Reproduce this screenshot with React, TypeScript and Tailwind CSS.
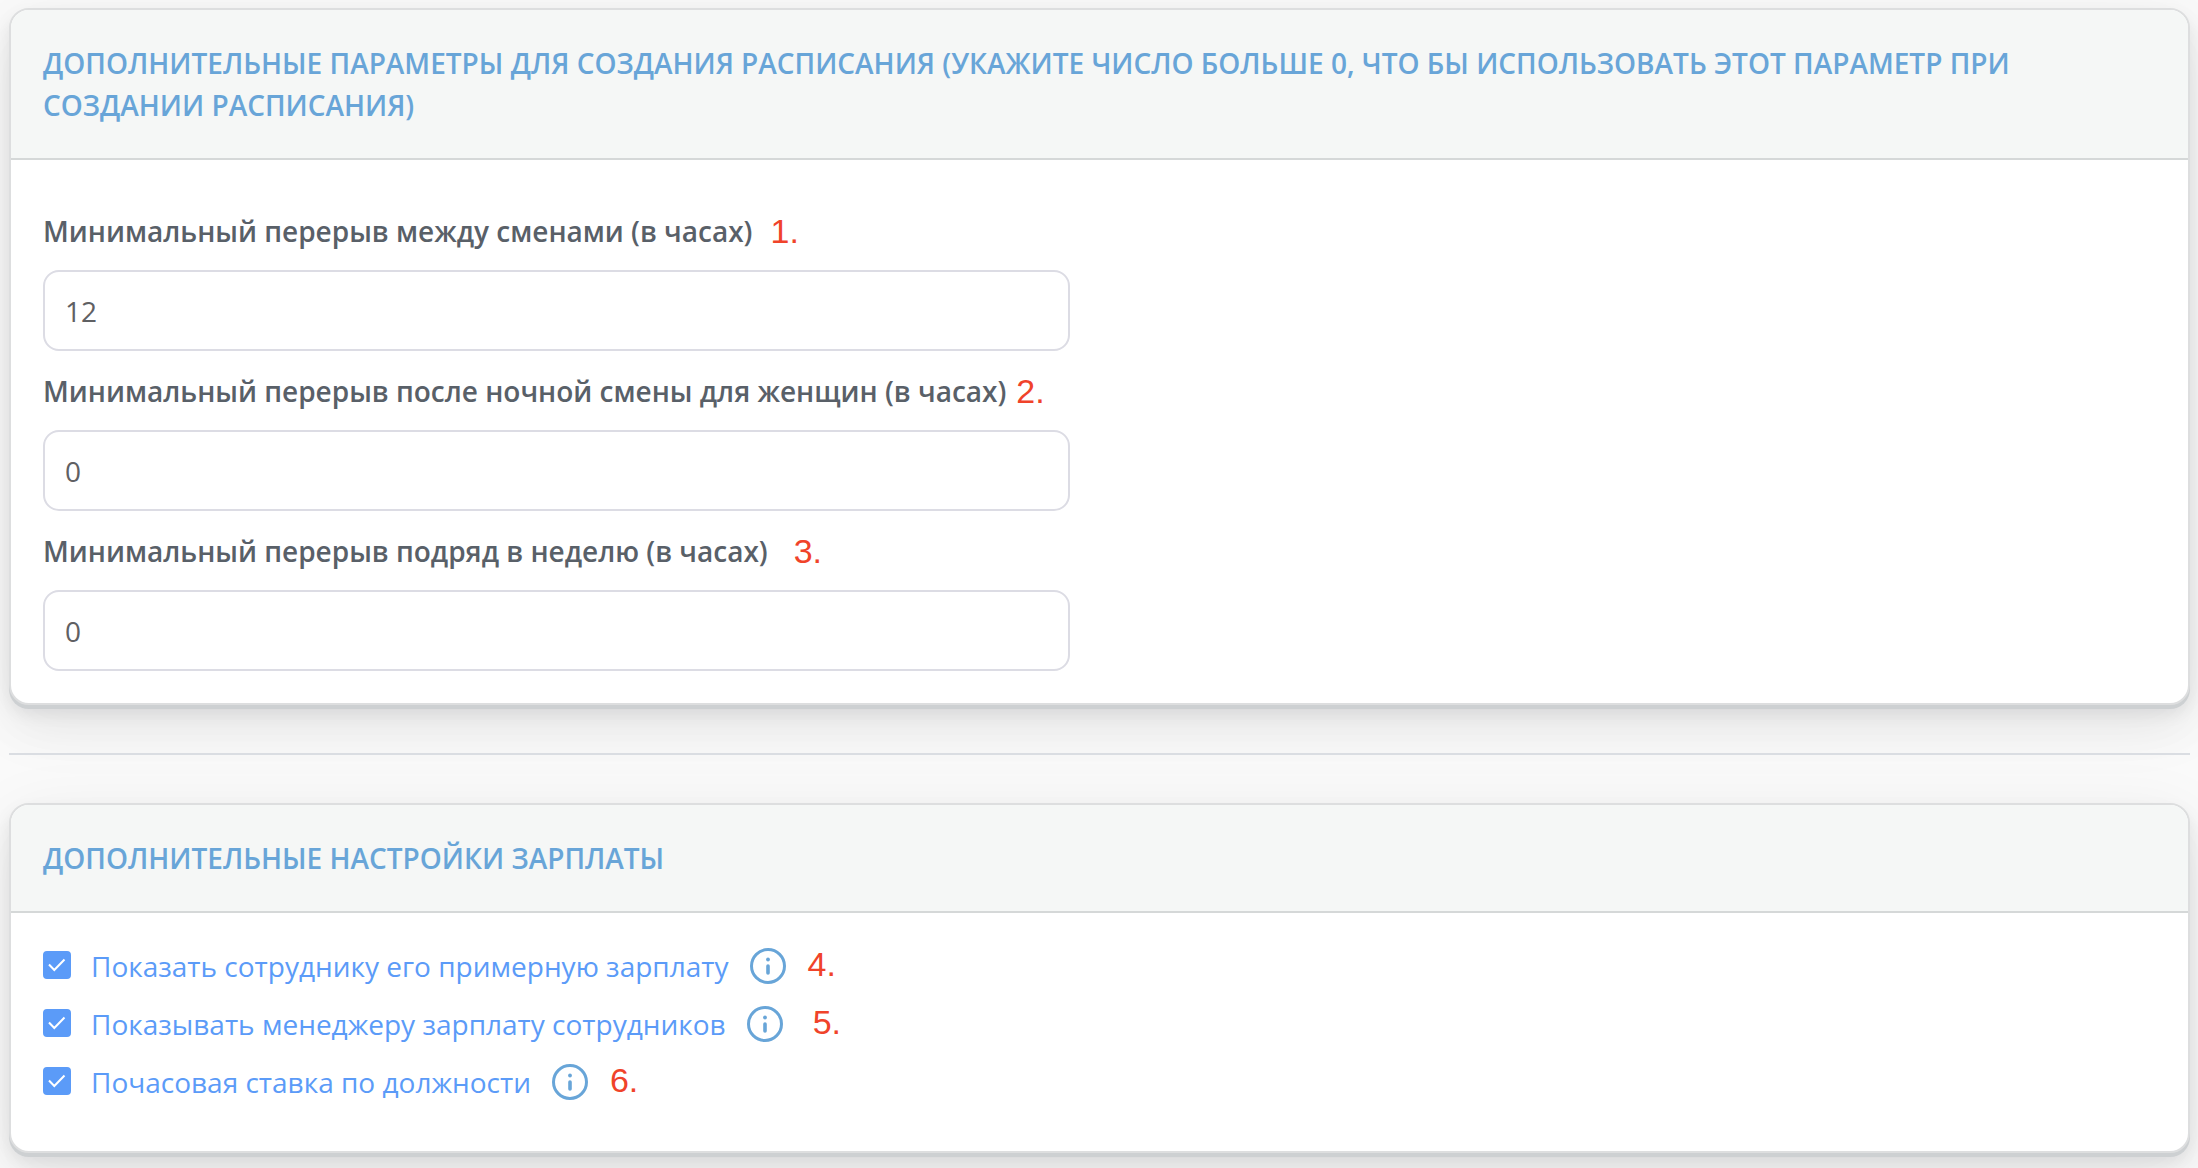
import { ReactNode, useState } from 'react';

interface CardProps {
  title: string;
  children: ReactNode;
}

interface BreakField {
  id: string;
  label: string;
  value: string;
  mark: string;
  markGap: string;
}

interface SalaryOption {
  id: string;
  label: string;
  mark: string;
  markGap: string;
}

const breakFields: BreakField[] = [
  { id: 'break-shifts', label: 'Минимальный перерыв между сменами (в часах)', value: '12', mark: '1.', markGap: 'ml-[18px]' },
  { id: 'break-night', label: 'Минимальный перерыв после ночной смены для женщин (в часах)', value: '0', mark: '2.', markGap: 'ml-[10px]' },
  { id: 'break-week', label: 'Минимальный перерыв подряд в неделю (в часах)', value: '0', mark: '3.', markGap: 'ml-[26px]' },
];

const salaryOptions: SalaryOption[] = [
  { id: 'show-employee', label: 'Показать сотруднику его примерную зарплату', mark: '4.', markGap: 'ml-[22px]' },
  { id: 'show-manager', label: 'Показывать менеджеру зарплату сотрудников', mark: '5.', markGap: 'ml-[30px]' },
  { id: 'hourly-rate', label: 'Почасовая ставка по должности', mark: '6.', markGap: 'ml-[22px]' },
];

function Card({ title, children }: CardProps) {
  return (
    <section className="overflow-hidden rounded-[20px] border-2 border-[#dddedf] bg-white shadow-[0_4px_0_#cdd0d2,0_8px_17px_rgba(4,9,20,0.08),0_15px_70px_rgba(4,9,20,0.07),0_30px_45px_rgba(4,9,20,0.03)]">
      <header className="border-b-2 border-[#d5d8d8] bg-[#f5f7f6] p-8">
        <h2 className="text-[28px] leading-[42px] font-semibold text-[#68a5d8] uppercase">{title}</h2>
      </header>
      {children}
    </section>
  );
}

function Mark({ text, gap }: { text: string; gap: string }) {
  return (
    <span className={`font-['Liberation_Sans',Arial,sans-serif] text-[34px] text-[#f0432a] ${gap}`}>
      {text}
    </span>
  );
}

function InfoIcon() {
  return (
    <svg className="size-9" viewBox="0 0 36 36" fill="none" stroke="currentColor" strokeWidth="3" strokeLinecap="round">
      <circle cx="18" cy="18" r="16.5" />
      <path d="M18 18v7" strokeWidth="3.6" />
      <circle cx="18" cy="11.5" r="1.9" fill="currentColor" stroke="none" />
    </svg>
  );
}

function NumberField({ field }: { field: BreakField }) {
  const [value, setValue] = useState(field.value);

  return (
    <div>
      <div className="mb-[18px] flex items-center leading-[42px]">
        <label htmlFor={field.id} className="text-[28px] font-semibold text-[#596068]">
          {field.label}
        </label>
        <Mark text={field.mark} gap={field.markGap} />
      </div>
      <input
        id={field.id}
        type="text"
        inputMode="numeric"
        value={value}
        onChange={(e) => setValue(e.target.value)}
        className="block h-[81px] w-[calc(50%-30px)] rounded-2xl border-2 border-[#dcdce4] bg-white px-5 text-[28px] leading-[42px] text-[#5f6063] outline-none focus:border-[#68a5d8]"
      />
    </div>
  );
}

function SalaryCheckbox({ option }: { option: SalaryOption }) {
  const [checked, setChecked] = useState(true);

  return (
    <div className="flex items-start leading-[38px]">
      <label htmlFor={option.id} className="flex cursor-pointer items-start gap-5 text-[28px] leading-[42px] text-[#5b9bf8]">
        <span className="grid h-10 w-7 place-items-center">
          <input
            id={option.id}
            type="checkbox"
            checked={checked}
            onChange={(e) => setChecked(e.target.checked)}
            className="peer col-start-1 row-start-1 size-7 appearance-none rounded-sm border-2 border-[#5b9bf8] checked:bg-[#5b9bf8]"
          />
          <svg
            className="pointer-events-none invisible col-start-1 row-start-1 size-7 text-white peer-checked:visible"
            viewBox="0 0 28 28"
            fill="none"
            stroke="currentColor"
            strokeWidth="2"
          >
            <path d="M6 13.5l5.3 5.5L21.5 8.5" />
          </svg>
        </span>
        {option.label}
      </label>
      <button type="button" aria-label="Подробнее" className="ml-[21px] flex h-[42px] items-center text-[#68a5d8]">
        <InfoIcon />
      </button>
      <Mark text={option.mark} gap={option.markGap} />
    </div>
  );
}

export default function App() {
  return (
    <main className="min-h-screen bg-[#fafafa] py-2 pr-2 pl-[9px] font-['Open_Sans','Noto_Sans',sans-serif]">
      <Card title="Дополнительные параметры для создания расписания (укажите число больше 0, что бы использовать этот параметр при создании расписания)">
        <div className="flex flex-col gap-[19px] px-8 pt-[50px] pb-8">
          {breakFields.map((field) => (
            <NumberField key={field.id} field={field} />
          ))}
        </div>
      </Card>
      <hr className="my-12 border-t-2 border-[#dadde2]" />
      <Card title="Дополнительные настройки зарплаты">
        <div className="flex flex-col gap-4 px-8 pt-8 pb-12">
          {salaryOptions.map((option) => (
            <SalaryCheckbox key={option.id} option={option} />
          ))}
        </div>
      </Card>
    </main>
  );
}
